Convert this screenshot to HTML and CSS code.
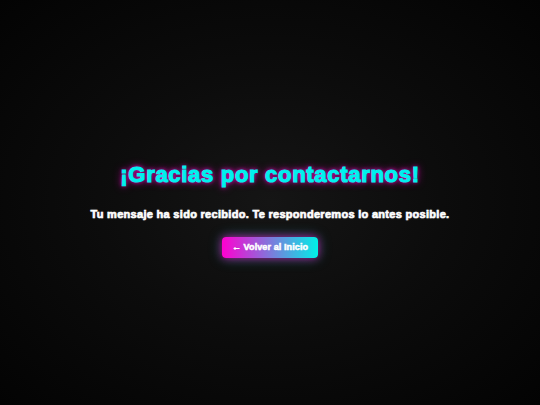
FILE: index.html
```html
<!DOCTYPE html>
<html lang="es">
<head>
<meta charset="utf-8">
<title>Gracias</title>
<link rel="stylesheet" href="styles.css">
</head>
<body>
<main class="page">
  <section class="card">
    <h1 class="title">¡Gracias por contactarnos!</h1>
    <p class="message">Tu mensaje ha sido recibido. Te responderemos lo antes posible.</p>
    <a class="btn" href="#">← Volver al Inicio</a>
  </section>
</main>
</body>
</html>
```
FILE: styles.css
```css
html, body {
  margin: 0;
  padding: 0;
  height: 100%;
}
body {
  background: radial-gradient(ellipse at center, #151515 0%, #0c0c0c 45%, #030303 100%);
  font-family: "Liberation Sans", Arial, sans-serif;
  color: #fff;
}
.page {
  box-sizing: border-box;
  height: 100%;
  padding-top: 14px;
  display: flex;
  align-items: center;
  justify-content: center;
}
.card {
  display: flex;
  flex-direction: column;
  align-items: center;
  text-align: center;
}
.title {
  margin: 0;
  font-size: 22px;
  font-weight: 700;
  letter-spacing: 0.7px;
  color: #00f0ee;
  text-shadow: 0 0 4px #ff00cc, 0 0 8px rgba(255, 0, 204, 0.8);
  -webkit-text-stroke: 1.1px #00f0ee;
}
.message {
  margin: 20px 0 0;
  font-size: 11px;
  font-weight: 700;
  letter-spacing: 0.3px;
  -webkit-text-stroke: 0.6px #fff;
  text-shadow: 0 0 2px rgba(255,255,255,0.35);
}
.btn {
  margin-top: 17px;
  display: inline-block;
  padding: 5px 10px 6px;
  border-radius: 4px;
  background: linear-gradient(90deg, #ff00d0 0%, #00f0e8 100%);
  color: #fff;
  font-size: 9px;
  font-weight: 700;
  letter-spacing: 0.1px;
  text-decoration: none;
  -webkit-text-stroke: 0.5px #fff;
  box-shadow: 0 0 8px rgba(255, 0, 200, 0.7), 0 0 14px rgba(0, 240, 240, 0.35);
}
```
